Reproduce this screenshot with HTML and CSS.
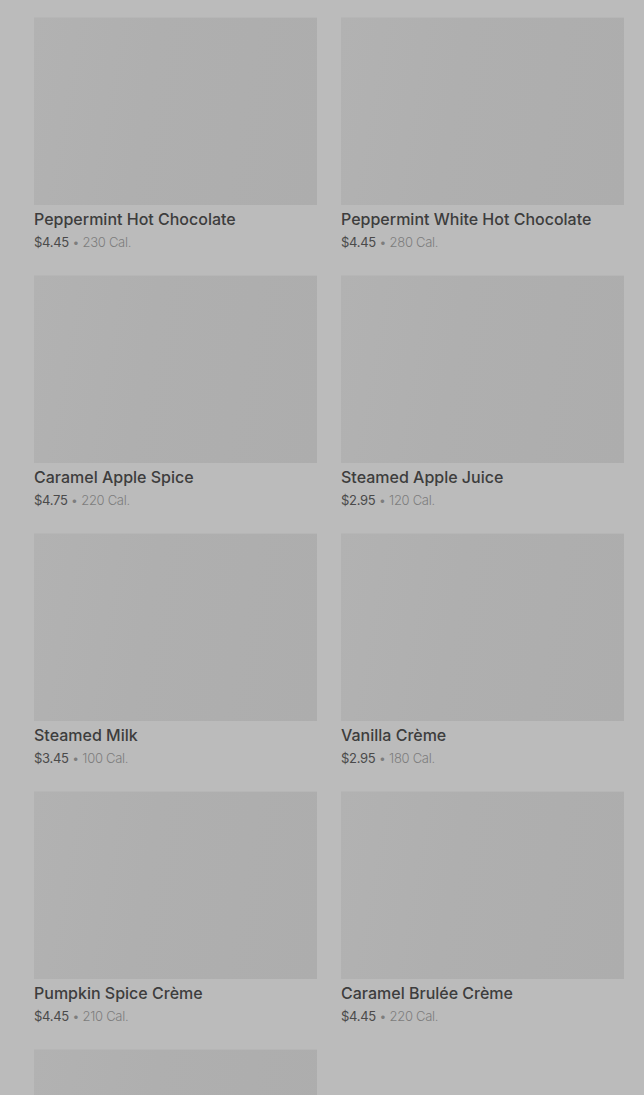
FILE: index.html
```html
<!DOCTYPE html>
<html>
<head>
<meta charset="utf-8">
<link rel="stylesheet" href="styles.css">
</head>
<body>
<div class="grid">
  <div class="card"><div class="img"></div><div class="name">Peppermint Hot Chocolate</div><div class="meta"><span class="price">$4.45</span> • 230 Cal.</div></div>
  <div class="card"><div class="img"></div><div class="name">Peppermint White Hot Chocolate</div><div class="meta"><span class="price">$4.45</span> • 280 Cal.</div></div>
  <div class="card"><div class="img"></div><div class="name">Caramel Apple Spice</div><div class="meta"><span class="price">$4.75</span> • 220 Cal.</div></div>
  <div class="card"><div class="img"></div><div class="name">Steamed Apple Juice</div><div class="meta"><span class="price">$2.95</span> • 120 Cal.</div></div>
  <div class="card"><div class="img"></div><div class="name">Steamed Milk</div><div class="meta"><span class="price">$3.45</span> • 100 Cal.</div></div>
  <div class="card"><div class="img"></div><div class="name">Vanilla Crème</div><div class="meta"><span class="price">$2.95</span> • 180 Cal.</div></div>
  <div class="card"><div class="img"></div><div class="name">Pumpkin Spice Crème</div><div class="meta"><span class="price">$4.45</span> • 210 Cal.</div></div>
  <div class="card"><div class="img"></div><div class="name">Caramel Brulée Crème</div><div class="meta"><span class="price">$4.45</span> • 220 Cal.</div></div>
  <div class="card"><div class="img"></div></div>
</div>
</body>
</html>
```
FILE: styles.css
```css
html, body {
  margin: 0;
  padding: 0;
  background: #bbbbbb;
  overflow: hidden;
}
body {
  font-family: Inter, Roboto, "Noto Sans", sans-serif;
  height: 1095px;
}
.grid {
  display: grid;
  grid-template-columns: 283px 283px;
  column-gap: 24px;
  row-gap: 25px;
  padding: 18px 20px 0 34px;
}
.img {
  height: 187px;
  background: linear-gradient(100deg, #b2b2b2 0%, #afafaf 40%, #adadad 100%);
  box-shadow: 0 -1px 0 #b6b6b6;
}
.name {
  margin-top: 3px;
  font-size: 16px;
  line-height: 22px;
  font-weight: 500;
  color: #3d3d3d;
}
.meta {
  margin-top: 3px;
  font-size: 13px;
  line-height: 18px;
  color: #7d7d7d;
  font-weight: 300;
  letter-spacing: -0.3px;
}
.price {
  color: #4a4a4a;
  font-weight: 400;
}
```
